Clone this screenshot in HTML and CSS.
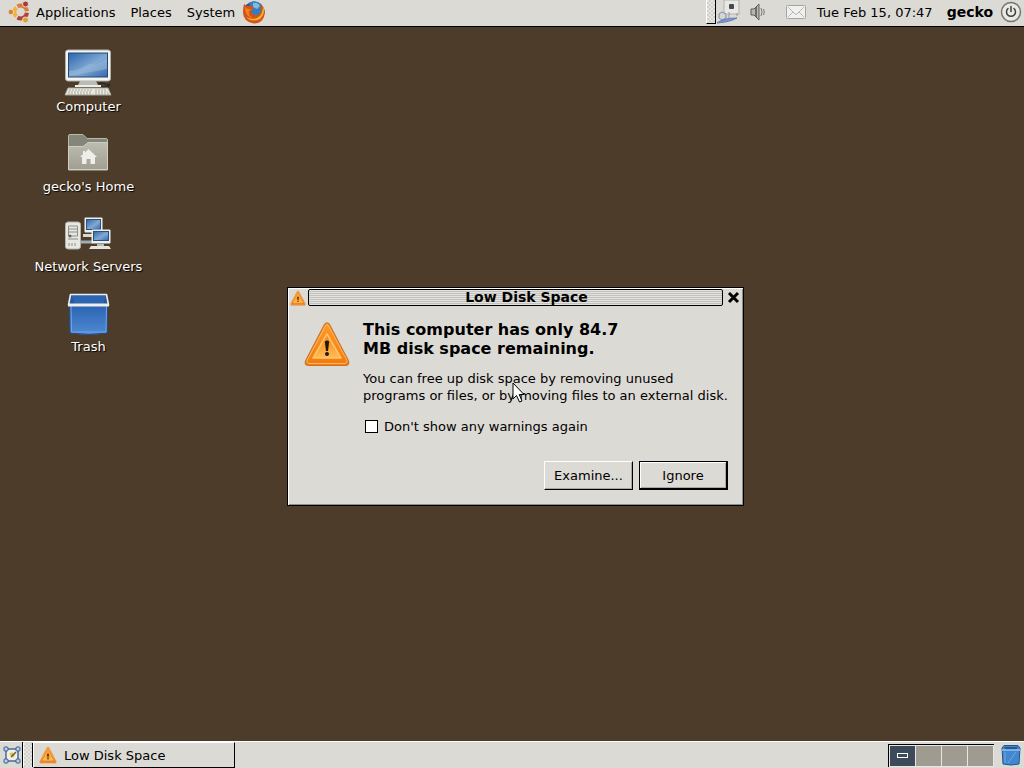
FILE: index.html
```html
<!DOCTYPE html>
<html lang="en">
<head>
<meta charset="utf-8">
<title>Desktop</title>
<meta name="viewport" content="width=device-width, initial-scale=1">
<link rel="stylesheet" href="styles.css">
</head>
<body>
<svg class="defs" width="0" height="0" aria-hidden="true">
  <defs>
    <linearGradient id="screen" x1="0" y1="0" x2="1" y2="1"><stop offset="0" stop-color="#2b65ad"/><stop offset=".55" stop-color="#81a9d2"/><stop offset="1" stop-color="#3468ac"/></linearGradient>
    <linearGradient id="amber" x1="0" y1="0" x2="0" y2="1"><stop offset="0" stop-color="#ff9a28"/><stop offset="1" stop-color="#f37a0c"/></linearGradient>
    <linearGradient id="amberIn" x1="0" y1="0" x2="0" y2="1"><stop offset="0" stop-color="#f78210"/><stop offset="1" stop-color="#ffbd55"/></linearGradient>
    <linearGradient id="bin" x1="0" y1="0" x2="0" y2="1"><stop offset="0" stop-color="#2860ae"/><stop offset="1" stop-color="#4f8ad4"/></linearGradient>
    <linearGradient id="folder" x1="0" y1="0" x2="0" y2="1"><stop offset="0" stop-color="#bdbcb0"/><stop offset="1" stop-color="#a09f92"/></linearGradient>
    <symbol id="warning" viewBox="0 0 48 48">
      <path d="M21.5 4.500Q24 1 26.5 4.500L45.500 41Q46.500 45 43 45.5H5Q1.500 45 2.500 41Z" fill="url(#amber)" stroke="#c8762c" stroke-width="1.2"/>
      <path d="M22.4 6Q24 3.500 25.6 6L44 40.5Q44.5 43 42 43.5H6Q3.500 43 4 40.500Z" fill="none" stroke="#ffb765" stroke-width="1"/>
      <path d="M24 14L38 38H10Z" fill="url(#amberIn)" stroke="#ffc46c" stroke-width="1.500" stroke-linejoin="round"/>
      <path d="M21.800 21.500Q24 19.500 26.200 21.500L25 31H23Z" fill="#201808"/><circle cx="24" cy="34" r="2" fill="#201808"/>
    </symbol>
    <symbol id="trash-can" viewBox="0 0 48 48">
      <path d="M4.500 14H42.500L42 44Q24 47 5 44Z" fill="url(#bin)" stroke="#1e4d94" stroke-width="1"/>
      <path d="M6 16H41.500L41 43H6.500Z" fill="none" stroke="#78a5df" stroke-width="1"/>
      <path d="M5 5H42L44 16H3.500Z" fill="#24599f"/><path d="M6 5H42L38 15H10Z" fill="#2d65b0"/>
      <path d="M5.500 5.500H41.500L43.500 16H3.500Z" fill="none" stroke="#eeeeec" stroke-width="1.600" stroke-linejoin="round"/>
      <path d="M3 16H44" stroke="#eeeeec" stroke-width="3"/>
    </symbol>
  </defs>
</svg>

<header class="panel panel-top">
  <nav class="menubar" aria-label="Main menu">
    <button class="menu" type="button">
      <svg width="22" height="22" viewBox="0 0 22 22" aria-hidden="true">
        <g fill="none" stroke-width="4"><path d="M8.300 15.500A6.200 6.200 0 0 1 8.300 6.500" stroke="#efb43a"/><path d="M9.500 5.500A6.200 6.200 0 0 1 18.900 10.200" stroke="#dd7a35"/><path d="M18.900 11.800A6.200 6.200 0 0 1 9.500 16.500" stroke="#b0443a"/></g>
        <g stroke="#dedbd4"><circle cx="2.800" cy="11" r="2.800" fill="#e27d33"/><circle cx="17.500" cy="3" r="3" fill="#a83a36"/><circle cx="17.500" cy="19" r="3" fill="#e0a032"/></g>
      </svg>
      Applications
    </button>
    <button class="menu" type="button">Places</button>
    <button class="menu" type="button">System</button>
  </nav>
  <button class="launcher" type="button" aria-label="Web browser">
    <svg width="24" height="24" viewBox="0 0 24 24" aria-hidden="true">
      <circle cx="12" cy="12" r="10.500" fill="#235898"/>
      <path d="M7 3Q13-1 19 4L21 11L17 16L10 15Z" fill="#357ebd"/><path d="M11 3Q16 2 18 6L15 9L11 7Z" fill="#79bfe1"/>
      <path d="M2 4Q4 6 7 6Q11 5 12 8L9 11Q10 15 14 15Q19 15 19 10Q19 7 17 4Q23 7 23 13Q21 24 12 23.500Q1 22 1 12Q1 8 2 4Z" fill="#d65317"/>
      <path d="M21 6Q24 13 18 19Q10 23 4 17Q9 20 15 18Q21 15 21 6Z" fill="#f5b32b"/>
      <path d="M3 7Q6 10 10 9L7 11Q6 16 11 18Q3 17 3 7Z" fill="#ee821e"/>
    </svg>
  </button>
  <div class="tray">
    <span class="handle tray-handle"></span>
    <svg width="24" height="24" viewBox="0 0 24 24" aria-hidden="true">
      <rect x="8" y="0" width="15" height="14" fill="#e8e8e4" stroke="#b2b2ad"/><rect x="13" y="4" width="5" height="5" rx="1" fill="#45494b"/><path d="M13 12v6M21 13v3" stroke="#999" />
      <path d="M3 14l3-2 4 2v4l-4 2-3-2z" fill="#d3d7d4" stroke="#7e8eaa"/><path d="M1 23Q7 18 21 18Q14 22 1 23Z" fill="#8299c8" stroke="#627eb4"/>
    </svg>
    <svg class="tray-volume" width="20" height="20" viewBox="0 0 20 20" aria-hidden="true">
      <path d="M3 7h3l5-5v16l-5-5H3z" fill="#b7b8b4" stroke="#5c5d59"/><path d="M8 5v10" stroke="#555753" stroke-width="1.500"/><path d="M13 6q2 4 0 8M15.500 7q1.500 3 0 6" fill="none" stroke="#777"/>
    </svg>
    <svg class="tray-mail" width="22" height="18" viewBox="0 0 22 18" aria-hidden="true">
      <rect x="1.500" y="2.500" width="19" height="13" rx="1" fill="#f0f0ee" stroke="#a4a5a1"/><path d="M3 4l7 7q1 1 2 0l7-7M3 14l5-5M19 14l-5-5" fill="none" stroke="#b6b7b3"/>
    </svg>
    <time class="clock">Tue Feb 15, 07:47</time>
    <button class="user" type="button">gecko
      <svg width="22" height="22" viewBox="0 0 22 22" aria-hidden="true"><circle cx="11" cy="11" r="9.500" fill="#e9e9e6" stroke="#747570" stroke-width="1.500"/><path d="M8 7.500a4.500 4.500 0 1 0 6 0M11 5.500v5" fill="none" stroke="#3d3e3b" stroke-width="1.500" stroke-linecap="round"/></svg>
    </button>
  </div>
</header>

<main class="desktop">
  <div class="icons">
    <a class="icon" href="#computer">
      <svg width="48" height="48" viewBox="0 0 48 48" aria-hidden="true">
        <rect x="1.500" y="1" width="45" height="31" rx="2.500" fill="#f4f5f3" stroke="#aeb0ac"/><rect x="4.500" y="4" width="39" height="24" fill="url(#screen)" stroke="#24477b"/><path d="M5 22Q17 21 25 15Q34 17 43 9V20Q28 23 5 27Z" fill="#99b9da" opacity=".55"/>
        <path d="M16 32H32L34 36H14Z" fill="#b9bbb6"/><path d="M11 36H37V38H11Z" fill="#eeeeea"/><path d="M35 35Q38 33 41 35T46 35M37 38Q43 39 46 36" fill="none" stroke="#242a29" stroke-width="1.500"/>
        <path d="M4 39H44L47 46H1Z" fill="#e9e9df" stroke="#a5a69a"/><path d="M5 41H28M4 43H28M4 45H28M31 41H43M31 43H44M31 45H45" stroke="#aaa99a" stroke-dasharray="2 1"/>
      </svg>
      Computer
    </a>
    <a class="icon" href="#home">
      <svg width="48" height="48" viewBox="0 0 48 48" aria-hidden="true">
        <path d="M4.500 41V7Q4.500 5.500 6 5.500H19L23 9.500H42Q43.500 9.500 43.500 11V41Z" fill="#85867a" stroke="#b9b9ac"/>
        <path d="M4.500 40.500V17.500H19L24 13.500H43.500V40.500Z" fill="url(#folder)" stroke="#cecec3"/>
        <path d="M24.500 20L33 28H31V35H26.500V30H22.500V35H18V28H16L19 25V22H21V23.500Z" fill="#eeeeea"/>
      </svg>
      gecko's Home
    </a>
    <a class="icon" href="#network">
      <svg width="48" height="48" viewBox="0 0 48 48" aria-hidden="true">
        <rect x="1.500" y="13" width="15" height="27" rx="2.500" fill="#e7e8e2" stroke="#b1b2aa"/><path d="M4.500 17H13.500V27H4.500Z" fill="none" stroke="#8d8e88"/><path d="M5 20H13M5 23H13M4 30H14M5 34V37M8 34V37M11 34V37" stroke="#8d8e88"/><circle cx="6" cy="27" r="1.500" fill="#60635e"/>
        <path d="M17 33H29" stroke="#9faeb0" stroke-width="3"/><path d="M19 25H28V28H19Z" fill="#d8dad3"/>
        <rect x="20.500" y="8.500" width="18" height="15" rx="1" fill="#eeeeec"/><rect x="22.500" y="10.500" width="14" height="10" fill="url(#screen)" stroke="#2b507e"/>
        <rect x="27.500" y="20.500" width="19" height="14" rx="1" fill="#eeeeec"/><rect x="29.500" y="22.500" width="15" height="9" fill="url(#screen)" stroke="#2b507e"/>
        <path d="M33 35H40V37H33Z" fill="#b9bbb6"/><path d="M27 37H45L47 40H25Z" fill="#e5e6dd"/>
      </svg>
      Network Servers
    </a>
    <a class="icon" href="#trash">
      <svg width="48" height="48" aria-hidden="true"><use href="#trash-can"/></svg>
      Trash
    </a>
  </div>

  <section class="dialog" role="dialog" aria-labelledby="dialog-title">
    <div class="titlebar">
      <svg width="16" height="16" aria-hidden="true"><use href="#warning"/></svg>
      <div class="title-strip"><span class="title" id="dialog-title">Low Disk Space</span></div>
      <button class="close" type="button" aria-label="Close">
        <svg width="13" height="13" viewBox="0 0 13 13" aria-hidden="true"><path d="M2 2L11 11M11 2L2 11" stroke="#000" stroke-width="3"/></svg>
      </button>
    </div>
    <div class="dialog-body">
      <svg width="48" height="48" aria-hidden="true"><use href="#warning"/></svg>
      <div class="message">
        <h1>This computer has only 84.7<br>MB disk space remaining.</h1>
        <p>You can free up disk space by removing unused<br>programs or files, or by moving files to an external disk.</p>
        <label class="check"><input type="checkbox">Don't show any warnings again</label>
      </div>
    </div>
    <div class="actions">
      <button class="action" type="button">Examine...</button>
      <button class="action action-default" type="button">Ignore</button>
    </div>
  </section>
  <svg class="pointer" width="14" height="22" viewBox="0 0 14 22" aria-hidden="true"><path d="M1 1V17L4.500 13.500L7.500 20L10 19L7.200 12.500H12Z" fill="#fff" stroke="#000"/></svg>
</main>

<footer class="panel panel-bottom">
  <button class="show-desktop" type="button" aria-label="Show desktop">
    <svg width="18" height="18" viewBox="0 0 18 18" aria-hidden="true"><rect x="3" y="3" width="12" height="12" fill="#f0f0e9" stroke="#496b9d" stroke-width="1.500"/><g fill="#bfd0e5" stroke="#345a92"><rect x="1" y="1" width="4" height="4" rx="1"/><rect x="13" y="1" width="4" height="4" rx="1"/><rect x="1" y="13" width="4" height="4" rx="1"/><rect x="13" y="13" width="4" height="4" rx="1"/></g><path d="M6 8l3-2 3 3-2 3z" fill="#e2c34a"/><path d="M8 11l5-5" stroke="#635c39" stroke-width="1.500"/></svg>
  </button>
  <span class="handle"></span>
  <button class="task" type="button"><svg width="18" height="18" aria-hidden="true"><use href="#warning"/></svg>Low Disk Space</button>
  <div class="switcher">
    <button class="workspace current" type="button" aria-label="Workspace 1"><span class="mini"></span></button>
    <button class="workspace" type="button" aria-label="Workspace 2"></button>
    <button class="workspace" type="button" aria-label="Workspace 3"></button>
    <button class="workspace" type="button" aria-label="Workspace 4"></button>
  </div>
  <button class="bin" type="button" aria-label="Trash"><svg width="22" height="22" viewBox="0 0 22 22" aria-hidden="true"><path d="M2 4L4 1.500H18L20 4L19 20Q11 22 3 20Z" fill="#4288d0" stroke="#275587"/><path d="M4 3H18L16 6H6Z" fill="#27598f"/><path d="M2 6H20" stroke="#9ac3ec" stroke-width="1.500"/><path d="M5 8V19M8 19L16 8" stroke="#71a9df"/></svg></button>
</footer>
</body>
</html>
```

FILE: styles.css
```css
* { box-sizing: border-box; }

body {
  display: flex;
  flex-direction: column;
  min-height: 100vh;
  margin: 0;
  background: #4d3c29;
  color: #000;
  font: 13px/17px "DejaVu Sans", sans-serif;
}

button {
  padding: 0;
  border: 0;
  background: none;
  color: inherit;
  font: inherit;
}

svg { display: block; flex: none; }
.defs { position: absolute; }

.panel {
  display: flex;
  align-items: center;
  background: #dcdad5;
}

.panel-top {
  height: 27px;
  padding: 0 2px 2px 8px;
  border-bottom: 1px solid #000;
}

.menubar { display: flex; gap: 15px; }
.menu { display: flex; align-items: center; gap: 6px; }
.launcher { margin-left: 7px; }

.tray {
  display: flex;
  align-items: center;
  margin-left: auto;
}

.handle {
  width: 8px;
  height: 24px;
  border-left: 1px solid #fff;
  border-right: 1px solid #000;
  background: repeating-conic-gradient(#d2d0cb 0 25%, #e8e6e2 0 50%) 0 0 / 4px 4px;
}

.tray-handle { width: 10px; border-bottom: 1px solid #000; }
.tray-volume { margin-left: 8px; }
.tray-mail { margin-left: 17px; }
.clock { margin-left: 10px; }
.user {
  display: flex;
  align-items: center;
  gap: 7px;
  margin-left: 14px;
  font-size: 14px;
  font-weight: bold;
}

.desktop {
  position: relative;
  flex: 1;
}

.icons {
  display: flex;
  flex-direction: column;
  align-items: center;
  gap: 14px;
  width: 177px;
  padding-top: 22px;
}

.icon {
  display: flex;
  flex-direction: column;
  align-items: center;
  gap: 1px;
  color: #fff;
  text-decoration: none;
  text-shadow: 1px 1px 1px #000;
}

.dialog {
  position: absolute;
  top: 260px;
  left: 287px;
  width: 457px;
  border: 1px solid #000;
  background: #dcdad5;
  box-shadow: inset 1px 1px #fff, inset -1px -1px #8f8d88;
}

.titlebar {
  display: flex;
  align-items: center;
  gap: 2px;
  padding: 1px 3px 0 2px;
}

.title-strip {
  display: flex;
  flex: 1;
  justify-content: center;
  height: 17px;
  padding-left: 22px;
  border: 1px solid #000;
  border-radius: 2px;
  background: repeating-linear-gradient(#e4e2de 0 1px, #c3c1bd 1px 2px);
}

.title {
  font-size: 14px;
  font-weight: bold;
  line-height: 15px;
}

.close { padding: 0 0 0 2px; }

.dialog-body {
  display: flex;
  gap: 12px;
  padding: 14px 12px 0 15px;
}

h1 {
  margin: 0;
  font-size: 16px;
  line-height: 19px;
}

p { margin: 12px 0 14px; }

.check {
  display: flex;
  align-items: center;
  gap: 6px;
  padding-left: 2px;
}

.check input {
  appearance: none;
  width: 13px;
  height: 13px;
  margin: 0;
  border: 1px solid #000;
  background: #fff;
}

.actions {
  display: flex;
  justify-content: flex-end;
  gap: 6px;
  padding: 26px 15px 15px;
}

.action {
  width: 89px;
  height: 29px;
  border: 1px solid #000;
  border-top-color: #fff;
  border-left-color: #fff;
  box-shadow: inset -1px -1px #aaa8a3;
}

.action-default {
  border-color: #000;
  border-width: 1px 2px 2px 1px;
  box-shadow: inset 1px 1px #fff, inset -1px -1px #aaa8a3;
}

.pointer {
  position: absolute;
  top: 355px;
  left: 512px;
}

.panel-bottom {
  height: 27px;
  padding-right: 2px;
  border-top: 1px solid #fff;
}

.show-desktop {
  padding: 4px 1px 4px 3px;
  border-right: 1px solid #000;
}

.panel-bottom .handle { width: 10px; }

.task {
  display: flex;
  align-items: center;
  gap: 7px;
  width: 202px;
  height: 26px;
  padding-left: 5px;
  border: 1px solid #000;
  border-top-color: #fff;
  border-left-color: #fff;
}

.switcher {
  display: flex;
  gap: 1px;
  margin-left: auto;
  padding: 1px;
  background: #e8e6e2;
  border-top: 1px solid #000;
  border-left: 1px solid #000;
}

.workspace {
  display: grid;
  place-items: center;
  width: 25px;
  height: 20px;
  background: #9f9b90;
}

.current { background: #3d4a5a; }
.mini { width: 11px; height: 5px; border: 1px solid #fff; }
.bin { margin-left: 6px; }
```
